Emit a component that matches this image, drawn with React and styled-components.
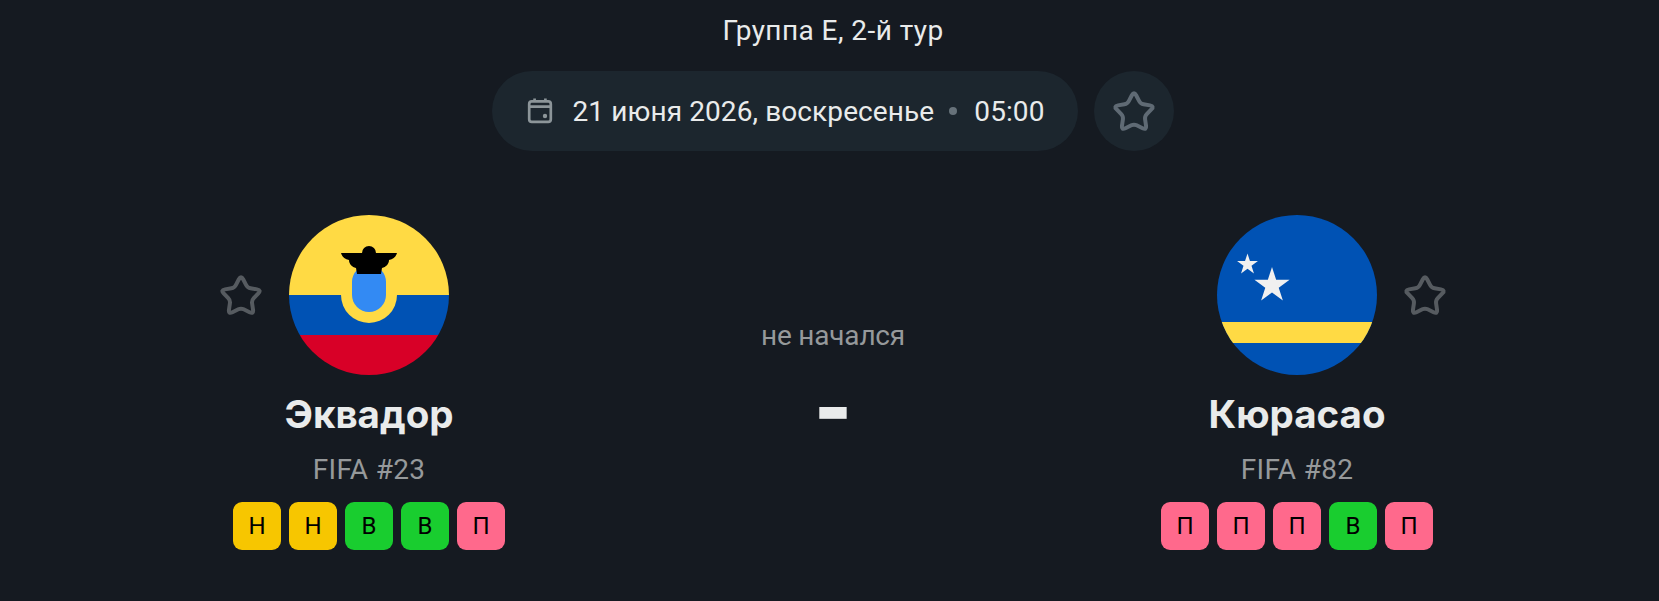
import React from "react";
import styled, { createGlobalStyle } from "styled-components";

const GlobalStyle = createGlobalStyle`
  html, body {
    margin: 0;
    background: #151a21;
  }
  body {
    font-family: Roboto, "Noto Sans", sans-serif;
  }
`;

const Page = styled.div`
  box-sizing: border-box;
  height: 601px;
  padding: 15px 0 0 7px;
  overflow: hidden;
  display: flex;
  flex-direction: column;
  align-items: center;
  color: #e9ebeb;
`;

const Title = styled.div`
  font-size: 28px;
  line-height: 32px;
  letter-spacing: 0.44px;
`;

const InfoRow = styled.div`
  margin-top: 24px;
  display: flex;
  gap: 16px;
`;

const DatePill = styled.div`
  box-sizing: border-box;
  height: 80px;
  padding: 0 33px 0 32px;
  display: flex;
  align-items: center;
  gap: 16px;
  border-radius: 40px;
  background: #1c262e;
  font-size: 28px;
  letter-spacing: 0.1px;
`;

const Dot = styled.span`
  width: 8px;
  height: 8px;
  margin: 0 1px 0 -1px;
  border-radius: 50%;
  background: #67727a;
`;

const RoundButton = styled.div`
  width: 80px;
  height: 80px;
  display: flex;
  align-items: center;
  justify-content: center;
  border-radius: 50%;
  background: #1c262e;
  color: #5f6a74;
`;

const Match = styled.div`
  margin-top: 64px;
  display: grid;
  grid-template-columns: repeat(3, 464px);
`;

const Team = styled.div`
  display: flex;
  flex-direction: column;
  align-items: center;
`;

const FlagRow = styled.div`
  display: grid;
  grid-template-columns: 100px 160px 100px;
  align-items: center;
  column-gap: 26px;
`;

const FavStar = styled.div`
  display: flex;
  justify-content: ${(p) => (p.$side === "left" ? "flex-end" : "flex-start")};
  color: #565b60;
`;

const FlagSvg = styled.svg`
  display: block;
  width: 160px;
  height: 160px;
  border-radius: 50%;
`;

const TeamName = styled.div`
  margin-top: 15px;
  font-family: Inter, sans-serif;
  font-weight: 700;
  font-size: 38.5px;
  line-height: 48px;
`;

const Rank = styled.div`
  margin-top: 16px;
  font-size: 28px;
  line-height: 32px;
  letter-spacing: 0.3px;
  color: #96999b;
`;

const Badges = styled.div`
  margin-top: 16px;
  display: flex;
  gap: 8px;
`;

const badgeColors = { В: "#19cd2f", Н: "#f7c600", П: "#ff698c" };

const Badge = styled.div`
  width: 48px;
  height: 48px;
  display: flex;
  align-items: center;
  justify-content: center;
  border-radius: 9px;
  background: ${(p) => badgeColors[p.$result]};
  color: #000;
  font-size: 24px;
`;

const Center = styled.div`
  padding-top: 103px;
  display: flex;
  flex-direction: column;
  align-items: center;
`;

const Status = styled.div`
  font-size: 28px;
  line-height: 36px;
  letter-spacing: -0.2px;
  color: #96999b;
`;

const Score = styled.div`
  margin-top: 8px;
  font-family: Inter, sans-serif;
  font-weight: 900;
  font-size: 80px;
  line-height: 90px;
`;

const CalendarIcon = () => (
  <svg width="32" height="32" viewBox="0 0 32 32" fill="none" stroke="#8c9599" strokeWidth="2.7">
    <rect x="5.2" y="6.4" width="21.6" height="20.4" rx="2.6" />
    <path d="M5.2 11.6h21.6M10.6 3.6v3M21.4 3.6v3" />
    <circle cx="21" cy="21" r="2.2" fill="#8c9599" stroke="none" />
  </svg>
);

// rounded star outline: every corner is cut back and joined by a curve
const roundedStarPath = (cx, cy, outer, inner, cutOuter, cutInner) => {
  const pts = Array.from({ length: 10 }, (_, i) => {
    const r = i % 2 ? inner : outer;
    const a = (Math.PI / 5) * i - Math.PI / 2;
    return [cx + r * Math.cos(a), cy + r * Math.sin(a), i % 2 ? cutInner : cutOuter];
  });
  const toward = (a, b, d) => {
    const len = Math.hypot(b[0] - a[0], b[1] - a[1]);
    return [a[0] + ((b[0] - a[0]) * d) / len, a[1] + ((b[1] - a[1]) * d) / len];
  };
  return (
    pts
      .map((p, i) => {
        const prev = pts[(i + 9) % 10];
        const next = pts[(i + 1) % 10];
        const s = toward(p, prev, p[2]);
        const e = toward(p, next, p[2]);
        const f = (n) => n.toFixed(2);
        return `${i ? "L" : "M"}${f(s[0])} ${f(s[1])}Q${f(p[0])} ${f(p[1])} ${f(e[0])} ${f(e[1])}`;
      })
      .join("") + "Z"
  );
};

const OutlineStar = () => (
  <svg width="44" height="44" viewBox="0 0 44 44" fill="none" stroke="currentColor" strokeWidth="4">
    <path d={roundedStarPath(22, 23.8, 21.6, 11.2, 4.6, 3)} />
  </svg>
);

const EcuadorFlag = () => (
  <FlagSvg viewBox="0 0 160 160">
    <rect width="160" height="80" fill="#ffda44" />
    <rect y="80" width="160" height="40" fill="#0052b4" />
    <rect y="120" width="160" height="40" fill="#d80027" />
    <path d="M52 80h56a28 28 0 0 1-56 0z" fill="#ffda44" />
    <rect x="63" y="50" width="34" height="47" rx="17" fill="#338af3" />
    <path d="M52 38h21a7 7 0 0 1 14 0h21c-1 4-4 6-8 7 0 4-3 7-7 8l-1 6H68l-1-6c-4-1-7-4-7-8-4-1-7-3-8-7z" fill="#000" />
  </FlagSvg>
);

// five-pointed star around (cx, cy), r = outer radius
const starPoints = (cx, cy, r) =>
  Array.from({ length: 10 }, (_, i) => {
    const rad = i % 2 ? r * 0.382 : r;
    const a = (Math.PI / 5) * i - Math.PI / 2;
    return `${(cx + rad * Math.cos(a)).toFixed(2)},${(cy + rad * Math.sin(a)).toFixed(2)}`;
  }).join(" ");

const CuracaoFlag = () => (
  <FlagSvg viewBox="0 0 160 160">
    <rect width="160" height="160" fill="#0052b4" />
    <rect y="107" width="160" height="21" fill="#ffda44" />
    <polygon points={starPoints(55, 70.5, 18.5)} fill="#f0f0f0" />
    <polygon points={starPoints(30.5, 49.5, 11)} fill="#f0f0f0" />
  </FlagSvg>
);

const TeamBlock = ({ name, rank, form, side, flag }) => (
  <Team>
    <FlagRow>
      <FavStar $side="left">{side === "left" && <OutlineStar />}</FavStar>
      {flag}
      <FavStar $side="right">{side === "right" && <OutlineStar />}</FavStar>
    </FlagRow>
    <TeamName>{name}</TeamName>
    <Rank>{rank}</Rank>
    <Badges>
      {form.map((r, i) => (
        <Badge key={i} $result={r}>
          {r}
        </Badge>
      ))}
    </Badges>
  </Team>
);

export default function App() {
  return (
    <>
      <GlobalStyle />
      <Page>
        <Title>Группа Е, 2-й тур</Title>
        <InfoRow>
          <DatePill>
            <CalendarIcon />
            <span>21 июня 2026, воскресенье</span>
            <Dot />
            <span>05:00</span>
          </DatePill>
          <RoundButton>
            <OutlineStar />
          </RoundButton>
        </InfoRow>
        <Match>
          <TeamBlock
            name="Эквадор"
            rank="FIFA #23"
            form={["Н", "Н", "В", "В", "П"]}
            side="left"
            flag={<EcuadorFlag />}
          />
          <Center>
            <Status>не начался</Status>
            <Score>-</Score>
          </Center>
          <TeamBlock
            name="Кюрасао"
            rank="FIFA #82"
            form={["П", "П", "П", "В", "П"]}
            side="right"
            flag={<CuracaoFlag />}
          />
        </Match>
      </Page>
    </>
  );
}
